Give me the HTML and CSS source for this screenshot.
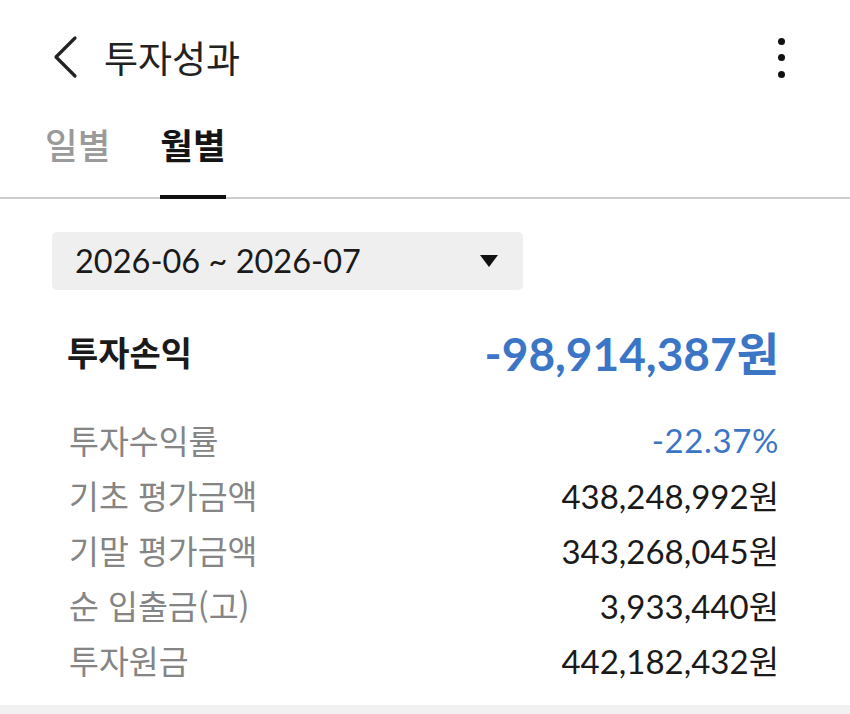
FILE: index.html
```html
<!DOCTYPE html>
<html lang="ko">
<head>
<meta charset="utf-8">
<title>투자성과</title>
<link rel="stylesheet" href="styles.css">
</head>
<body>
<div class="screen">
  <header class="topbar">
    <svg class="back" width="26" height="44" viewBox="0 0 26 44" aria-hidden="true">
      <path d="M22 3 L3 22 L22 41" fill="none" stroke="#222" stroke-width="3.2" stroke-linecap="round" stroke-linejoin="round"/>
    </svg>
    <h1 class="title">투자성과</h1>
    <div class="kebab" aria-hidden="true"><span></span><span></span><span></span></div>
  </header>
  <nav class="tabs">
    <div class="tab">일별</div>
    <div class="tab active">월별</div>
  </nav>
  <main class="content">
    <div class="period">
      <span class="period-text">2026-06 ~ 2026-07</span>
      <span class="caret"></span>
    </div>
    <div class="profit">
      <span class="profit-label">투자손익</span>
      <span class="profit-value">-98,914,387원</span>
    </div>
    <div class="rows">
      <div class="row"><span class="label">투자수익률</span><span class="value blue">-22.37%</span></div>
      <div class="row"><span class="label">기초 평가금액</span><span class="value">438,248,992원</span></div>
      <div class="row"><span class="label">기말 평가금액</span><span class="value">343,268,045원</span></div>
      <div class="row"><span class="label">순 입출금(고)</span><span class="value">3,933,440원</span></div>
      <div class="row"><span class="label">투자원금</span><span class="value">442,182,432원</span></div>
    </div>
  </main>
  <div class="band"></div>
</div>
</body>
</html>
```
FILE: styles.css
```css
* { box-sizing: border-box; }
html, body { margin: 0; padding: 0; background: #fff; }
body {
  font-family: "Noto Sans CJK KR", "Noto Sans", sans-serif;
  color: #1e1e1e;
  width: 850px;
  height: 714px;
  overflow: hidden;
}
.screen { width: 850px; }

.topbar {
  height: 114px;
  display: flex;
  align-items: center;
  padding-left: 53px;
  padding-right: 65px;
}
.back { display: block; flex: none; }
.title {
  margin: 0 0 0 25px;
  font-size: 37px;
  font-weight: 400;
  color: #222;
  line-height: 1;
  flex: 1;
}
.kebab {
  display: flex;
  flex-direction: column;
  gap: 9.5px;
  margin-top: 1px;
}
.kebab span {
  width: 7px;
  height: 7px;
  border-radius: 50%;
  background: #111;
}

.tabs {
  display: flex;
  gap: 50px;
  padding-left: 45px;
  border-bottom: 2px solid #cdcdcd;
  height: 85px;
}
.tab {
  font-size: 35.5px;
  font-weight: 500;
  color: #9a9a9a;
  line-height: 46px;
  padding-top: 7px;
  height: 85px;
  border-bottom: 4px solid transparent;
}
.tab.active {
  color: #151515;
  font-weight: 700;
  border-bottom-color: #111;
}

.content {
  padding: 33px 71px 18px 67px;
}
.period {
  margin-left: -15px;
  width: 471px;
  height: 58px;
  background: #efefef;
  border-radius: 5px;
  display: flex;
  align-items: center;
  justify-content: space-between;
  padding: 0 25px 0 23px;
}
.period-text {
  font-family: Lato, "Noto Sans CJK KR", sans-serif;
  font-size: 32.5px;
  color: #1a1a1a;
  line-height: 1;
}
.caret {
  width: 0;
  height: 0;
  border-left: 9px solid transparent;
  border-right: 9px solid transparent;
  border-top: 12px solid #111;
}

.profit {
  height: 122px;
  display: flex;
  align-items: center;
  justify-content: space-between;
}
.profit-label {
  font-size: 34px;
  font-weight: 700;
  color: #1a1a1a;
}
.profit-value {
  font-family: Lato, "Noto Sans CJK KR", sans-serif;
  font-size: 46px;
  font-weight: 700;
  color: #3b76c6;
}

.row {
  height: 55px;
  display: flex;
  align-items: center;
  justify-content: space-between;
}
.label {
  font-size: 32.5px;
  color: #858585;
  padding-left: 2px;
}
.value {
  font-family: Lato, "Noto Sans CJK KR", sans-serif;
  font-size: 33px;
  color: #1a1a1a;
}
.value.blue { color: #3b76c6; font-size: 33px; letter-spacing: 0.6px; }

.band {
  height: 20px;
  background: #f1f1f1;
}
```
